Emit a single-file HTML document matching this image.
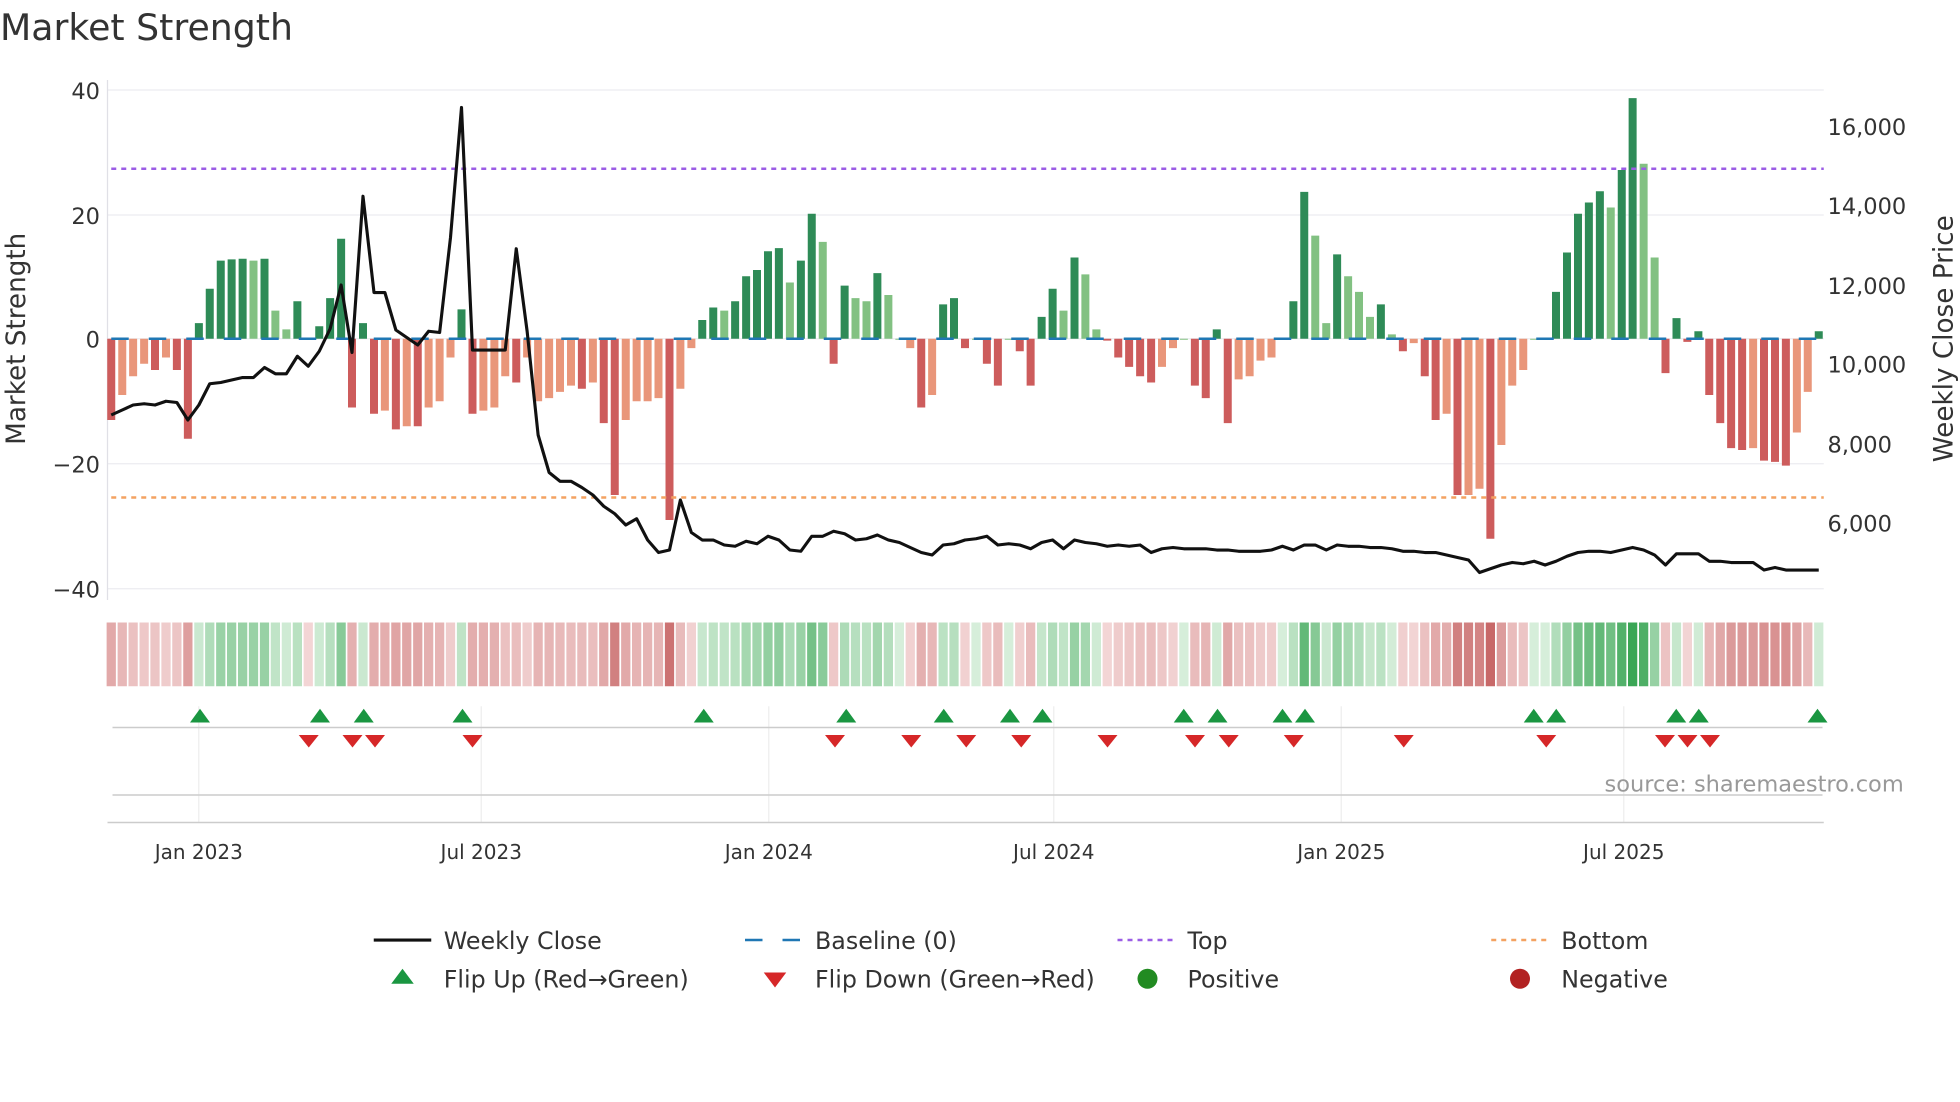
<!DOCTYPE html>
<html><head><meta charset="utf-8"><style>
html,body{margin:0;padding:0;background:#fff;}
svg{display:block;font-family:"DejaVu Sans","Liberation Sans",sans-serif;}
</style></head><body>
<svg id="s" width="1960" height="1102" viewBox="0 0 1568 881.6" xmlns="http://www.w3.org/2000/svg">
<rect width="1568" height="882" fill="#fff"/>
<text x="0" y="32" font-size="29" fill="#333">Market Strength</text>
<g stroke="#ececf0" stroke-width="1">
<line x1="86" y1="72" x2="1459" y2="72"/><line x1="86" y1="172" x2="1459" y2="172"/>
<line x1="86" y1="371" x2="1459" y2="371"/><line x1="86" y1="471" x2="1459" y2="471"/>
<line x1="86" y1="271" x2="1459" y2="271"/>
</g>
<line x1="86" y1="64" x2="86" y2="480" stroke="#e0e0e6"/>
<g font-size="18" fill="#333" text-anchor="end">
<text x="80" y="79">40</text><text x="80" y="179">20</text><text x="80" y="278">0</text>
<text x="80" y="378">−20</text><text x="80" y="478">−40</text>
</g>
<g font-size="18" fill="#333">
<text x="1462" y="108">16,000</text><text x="1462" y="171">14,000</text><text x="1462" y="235">12,000</text>
<text x="1462" y="298">10,000</text><text x="1462" y="362">8,000</text><text x="1462" y="425">6,000</text>
</g>
<text transform="translate(20,271) rotate(-90)" font-size="21" fill="#333" text-anchor="middle">Market Strength</text>
<text transform="translate(1562,271) rotate(-90)" font-size="21" fill="#333" text-anchor="middle">Weekly Close Price</text>
<g id="bars"></g>
<line x1="89" y1="271" x2="1459" y2="271" stroke="#1f77b4" stroke-width="2" stroke-dasharray="14,16"/>
<line x1="89" y1="135" x2="1459" y2="135" stroke="#9b5de5" stroke-width="2" stroke-dasharray="4,4"/>
<line x1="89" y1="398" x2="1459" y2="398" stroke="#f4a261" stroke-width="2" stroke-dasharray="4,4"/>
<polyline id="pl" fill="none" stroke="#111" stroke-width="2.5" stroke-linejoin="round"/>
<g id="heat"></g>
<g stroke="#eeeeee"><line x1="159" y1="565" x2="159" y2="658"/><line x1="385" y1="565" x2="385" y2="658"/><line x1="615" y1="565" x2="615" y2="658"/><line x1="843" y1="565" x2="843" y2="658"/><line x1="1073" y1="565" x2="1073" y2="658"/><line x1="1299" y1="565" x2="1299" y2="658"/></g>
<line x1="90" y1="582" x2="1458" y2="582" stroke="#ccc" stroke-width="1.2"/>
<line x1="90" y1="636" x2="1458" y2="636" stroke="#ccc" stroke-width="1.2"/>
<line x1="86" y1="658" x2="1459" y2="658" stroke="#ccc" stroke-width="1.2"/>
<g id="mk"></g>
<text x="1523" y="633" font-size="18" fill="#999" text-anchor="end">source: sharemaestro.com</text>
<g font-size="16" fill="#333" text-anchor="middle">
<text x="159" y="687">Jan 2023</text><text x="385" y="687">Jul 2023</text><text x="615" y="687">Jan 2024</text>
<text x="843" y="687">Jul 2024</text><text x="1073" y="687">Jan 2025</text><text x="1299" y="687">Jul 2025</text>
</g>
<g font-size="19" fill="#333">
<line x1="299" y1="752" x2="345" y2="752" stroke="#111" stroke-width="2.5"/><text x="355" y="759">Weekly Close</text>
<line x1="596" y1="752" x2="640" y2="752" stroke="#1f77b4" stroke-width="2" stroke-dasharray="14,16"/><text x="652" y="759">Baseline (0)</text>
<line x1="894" y1="752" x2="940" y2="752" stroke="#9b5de5" stroke-width="2" stroke-dasharray="4,4"/><text x="950" y="759">Top</text>
<line x1="1193" y1="752" x2="1239" y2="752" stroke="#f4a261" stroke-width="2" stroke-dasharray="4,4"/><text x="1249" y="759">Bottom</text>
<polygon points="322,775 331,787 313,787" fill="#1a9641"/><text x="355" y="790">Flip Up (Red→Green)</text>
<polygon points="611,778 629,778 620,790" fill="#d62728"/><text x="652" y="790">Flip Down (Green→Red)</text>
<circle cx="918" cy="783" r="8" fill="#228b22"/><text x="950" y="790">Positive</text>
<circle cx="1216" cy="783" r="8" fill="#b22222"/><text x="1249" y="790">Negative</text>
</g>
</svg>
<script>
var V=[[-13,1],[-9,0],[-6,0],[-4,0],[-5,1],[-3,0],[-5,1],[-16,1],[2.5,1],[8,1],[12.5,1],[12.7,1],[12.8,1],[12.5,0],[12.8,1],[4.5,0],[1.5,0],[6,1],[-0.2,1],[2,1],[6.5,1],[16,1],[-11,1],[2.5,1],[-12,1],[-11.5,0],[-14.5,1],[-14,0],[-14,1],[-11,0],[-10,0],[-3,0],[4.7,1],[-12,1],[-11.5,0],[-11,0],[-6,0],[-7,1],[-3,0],[-10,0],[-9.5,0],[-8.5,0],[-7.5,0],[-8,1],[-7,0],[-13.5,1],[-25,1],[-13,0],[-10,0],[-10,0],[-9.5,0],[-29,1],[-8,0],[-1.5,0],[3,1],[5,1],[4.5,0],[6,1],[10,1],[11,1],[14,1],[14.5,1],[9,0],[12.5,1],[20,1],[15.5,0],[-4,1],[8.5,1],[6.5,0],[6,0],[10.5,1],[7,0],[0,0],[-1.5,0],[-11,1],[-9,0],[5.5,1],[6.5,1],[-1.5,1],[0,0],[-4,1],[-7.5,1],[0,0],[-2,1],[-7.5,1],[3.5,1],[8,1],[4.5,0],[13,1],[10.3,0],[1.5,0],[-0.3,1],[-3,1],[-4.5,1],[-6,1],[-7,1],[-4.5,0],[-1.5,0],[0,0],[-7.5,1],[-9.5,1],[1.5,1],[-13.5,1],[-6.5,0],[-6,0],[-3.5,0],[-3,0],[0,0],[6,1],[23.5,1],[16.5,0],[2.5,0],[13.5,1],[10,0],[7.5,0],[3.5,0],[5.5,1],[0.7,0],[-2,1],[-0.7,0],[-6,1],[-13,1],[-12,0],[-25,1],[-25,0],[-24,0],[-32,1],[-17,0],[-7.5,0],[-5,0],[0,0],[0,0],[7.5,1],[13.8,1],[20,1],[21.8,1],[23.6,1],[21,0],[27,1],[38.5,1],[28,0],[13,0],[-5.5,1],[3.3,1],[-0.5,1],[1.2,1],[-9,1],[-13.5,1],[-17.5,1],[-17.8,1],[-17.5,0],[-19.5,1],[-19.7,1],[-20.3,1],[-15,0],[-8.5,0],[1.2,1]];
var P=[332,328,324,323,324,321,322,336,324,307,306,304,302,302,294,299,299,285,293,281,263,228,282,157,234,234,264,270,276,265,266,190,86,280,280,280,280,199,265,348,378,385,385,390,396,405,411,420,415,432,442,440,400,426,432,432,436,437,433,435,429,432,440,441,429,429,425,427,432,431,428,432,434,438,442,444,436,435,432,431,429,436,435,436,439,434,432,439,432,434,435,437,436,437,436,442,439,438,439,439,439,440,440,441,441,441,440,437,440,436,436,440,436,437,437,438,438,439,441,441,442,442,444,446,448,458,455,452,450,451,449,452,449,445,442,441,441,442,440,438,440,444,452,443,443,443,449,449,450,450,450,456,454,456,456,456,456];
var n=V.length,st=(1455-89)/(n-1),b="",h="",pts=[];
function mix(a,c,t){return "rgb("+[0,1,2].map(function(i){return Math.round(a[i]+(c[i]-a[i])*t)}).join(",")+")";}
for(var i=0;i<n;i++){var x=89+i*st,v=V[i][0],d=V[i][1];
 var col=v>=0?(d?"#2e8b57":"#82c182"):(d?"#cd5c5c":"#e9967a");
 var y=v>=0?271-v*5:271,hh=Math.max(Math.abs(v)*5,0.8);
 b+='<rect x="'+(x-3.2).toFixed(1)+'" y="'+y.toFixed(1)+'" width="6.4" height="'+hh.toFixed(1)+'" fill="'+col+'"/>';
 var t=Math.min(Math.abs(v)/32,1);
 var hc=v>=0?mix([214,238,218],[58,166,85],t):mix([243,214,214],[200,104,104],t);
 h+='<rect x="'+(x-3.7).toFixed(1)+'" y="498" width="7.4" height="51" fill="'+hc+'"/>';
 if(P[i]!==undefined)pts.push(x.toFixed(1)+","+P[i]);}
document.getElementById("bars").innerHTML=b;
document.getElementById("heat").innerHTML=h;
document.getElementById("pl").setAttribute("points",pts.join(" "));
var up=[160,256,291,370,563,677,755,808,834,947,974,1026,1044,1227,1245,1341,1359,1454],dn=[247,282,300,378,668,729,773,817,886,956,983,1035,1123,1237,1332,1350,1368],m="";
up.forEach(function(x){m+='<polygon points="'+x+',567 '+(x+8)+',578 '+(x-8)+',578" fill="#1a9641"/>';});
dn.forEach(function(x){m+='<polygon points="'+(x-8)+',588 '+(x+8)+',588 '+x+',598" fill="#d62728"/>';});
document.getElementById("mk").innerHTML=m;
</script>
</body></html>
